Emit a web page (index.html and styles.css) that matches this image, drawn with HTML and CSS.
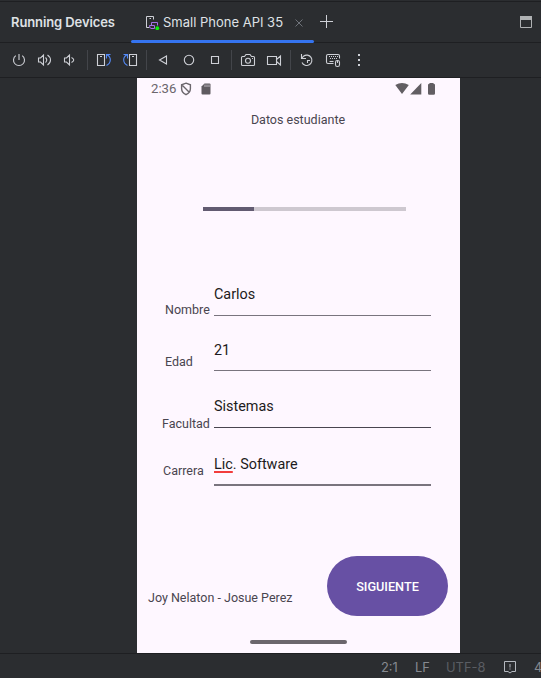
FILE: index.html
```html
<!DOCTYPE html>
<html lang="es">
<head>
<meta charset="utf-8">
<title>Running Devices</title>
<link rel="stylesheet" href="styles.css">
</head>
<body>
<div class="ide">
  <header class="tabs">
    <span class="tabs-title">Running Devices</span>
    <div class="tab">
      <svg class="tab-icon" width="16" height="16" viewBox="144 14 16 16" fill="none">
        <path d="M149.500 27.500H146.500V16.500H153.500V19.500M149.500 18.500H151" stroke="#ced0d6"/>
        <path d="M151.500 25.500V22.500H157.500V25.500M149.500 25.500H154.500V28.500H151Q149.500 28 149.500 25.500Z" stroke="#a571e6"/>
        <circle cx="157.300" cy="28.200" r="1.900" fill="#0cf00c"/>
      </svg>
      <span class="tab-label">Small Phone API 35</span>
      <svg class="tab-close" width="10" height="10" viewBox="0 0 10 10"><path d="M1.500 1.500L8.500 8.500M8.500 1.500L1.500 8.500" stroke="#6f737a"/></svg>
    </div>
    <svg class="tab-add" width="14" height="14" viewBox="0 0 14 14"><path d="M7.500 0V13M1 6.500H14" stroke="#ced0d6"/></svg>
    <svg class="window-icon" width="12" height="12" viewBox="0 0 12 12"><path d="M.5 .5H11.500V11.500H.5Z" fill="none" stroke="#afb1b3"/><path d="M0 0H12V4H0Z" fill="#afb1b3"/></svg>
  </header>
  <div class="toolbar">
    <svg class="tool" viewBox="6 43 26 34"><path d="M19 54V60M15.800 55.600A5.500 5.500 0 1 0 22.200 55.600"/></svg>
    <svg class="tool" viewBox="32 43 26 34"><path d="M38.500 58H40.500L43.500 55V65L40.500 62H38.500ZM45.500 57.500Q48 60 45.500 62.500M47.500 55Q50.500 57 50.500 60Q50.500 63 47.500 65" /></svg>
    <svg class="tool" viewBox="58 43 26 34"><path d="M64.500 58H66.500L69.500 55V65L66.500 62H64.500ZM71.500 57.500Q76 60 71.500 62.500"/></svg>
    <i class="sep"></i>
    <svg class="tool" viewBox="91 43 26 34"><path d="M97.500 54.500H104.500V65.500H97.500ZM100 56.500H102"/><path class="blue" d="M106.500 65.500C111.500 63 111.500 57 107 54.700M110.500 54.500H106.500V58.500"/></svg>
    <svg class="tool" viewBox="117 43 26 34"><path d="M129.500 54.500H136.500V65.500H129.500ZM132 56.500H134"/><path class="blue" d="M127.500 65.500C122.500 63 122.500 57 127 54.700M123.500 54.500H127.500V58.500"/></svg>
    <i class="sep"></i>
    <svg class="tool" viewBox="150 43 26 34"><path d="M159.500 60L166.500 56V64Z"/></svg>
    <svg class="tool" viewBox="176 43 26 34"><circle cx="189" cy="60" r="4.700"/></svg>
    <svg class="tool" viewBox="202 43 26 34"><path d="M211.500 56.500H218.500V63.500H211.500Z"/></svg>
    <i class="sep"></i>
    <svg class="tool" viewBox="235 43 26 34"><path d="M242.500 56.500H244.500L246 54.500H250L251.500 56.500H253.500Q254.500 56.500 254.500 57.500V64.500Q254.500 65.500 253.500 65.500H242.500Q241.500 65.500 241.500 64.500V57.500Q241.500 56.500 242.500 56.500Z"/><circle cx="248" cy="60.700" r="2.500"/><path d="M252 58.500H253"/></svg>
    <svg class="tool" viewBox="261 43 26 34"><path d="M267.500 56.500H276.500V64.500H267.500ZM276.500 59.500L280.500 56V65L276.500 61.500"/></svg>
    <i class="sep"></i>
    <svg class="tool" viewBox="294 43 26 34"><path d="M302 62.500A5.200 5.200 0 1 0 303.500 56.200L302 58M301.500 54V58.500H306M307.500 63V60.500H310"/></svg>
    <svg class="tool" viewBox="320 43 26 34"><path d="M333.500 63.500H328Q326.500 63.500 326.500 62V56Q326.500 54.500 328 54.500H338Q339.500 54.500 339.500 56V58.500"/><path d="M329 56.500H338M330 58.500H337" stroke-dasharray="1 1"/><path d="M329.500 61.500H333.500"/><rect x="335.500" y="60.500" width="4" height="6" rx="1.800"/><path d="M337.500 60.500V63"/></svg>
    <svg class="tool" viewBox="346 43 26 34"><path class="dots" d="M358 54H360V56H358ZM358 59H360V61H358ZM358 64H360V66H358Z"/></svg>
  </div>
  <main class="stage">
    <section class="phone">
      <div class="android-bar">
        <span class="clock">2:36</span>
        <svg class="shield" width="12" height="14" viewBox="180 82 12 14" fill="none" stroke="#6b666c" stroke-width="1.400"><path d="M186 83.200L190.400 84.800V88.500Q190.400 92.500 186 94.600Q181.600 92.500 181.600 88.500V84.800ZM182.500 85.500L189 92"/></svg>
        <svg class="sd" width="10" height="12" viewBox="0 0 10 12"><path d="M3.500 .5H8.500Q9.500 .5 9.500 1.500V10.500Q9.500 11.500 8.500 11.500H1.500Q.5 11.500 .5 10.500V3.500Z" fill="#5f5b60"/><path d="M4 1.500V4M6 1.500V4M8 1.500V4" stroke="#bdb8be"/></svg>
        <svg class="signals" width="41" height="14" viewBox="395 82 41 14" fill="#625e63"><path d="M395.300 85Q402 81 408.800 85L402 94ZM421.300 83V94.500H410.200ZM429.500 83.800V83H433.500V83.800Q435 83.800 435 85V93.500Q435 94.800 433.700 94.800H429.300Q428 94.800 428 93.500V85Q428 83.800 429.500 83.800Z"/></svg>
      </div>
      <h1 class="title">Datos estudiante</h1>
      <div class="progress"><div class="progress-value"></div></div>
      <form class="form">
        <label class="name">Nombre</label><div class="field">Carlos</div>
        <label class="age">Edad</label><div class="field age-field">21</div>
        <label class="faculty">Facultad</label><div class="field faculty-field">Sistemas</div>
        <label class="career">Carrera</label><div class="field career-field"><span class="typo">Lic</span>. Software</div>
      </form>
      <div class="actions">
        <span class="authors">Joy Nelaton - Josue Perez</span>
        <button class="next" type="button">SIGUIENTE</button>
      </div>
      <div class="gesture"></div>
    </section>
  </main>
  <footer class="status">
    <span class="position">2:1</span>
    <span class="ending">LF</span>
    <span class="encoding">UTF-8</span>
    <svg class="notice" width="14" height="14" viewBox="0 0 14 14" fill="none" stroke="#b4b8bf"><path d="M1.500 1.500H12.500V11.500H9L7 13L5 11.500H1.500ZM7 4V7.500M7 8.500V9.500"/></svg>
    <span class="indent">4</span>
  </footer>
</div>
</body>
</html>
```
FILE: styles.css
```css
* { box-sizing: border-box; }
body { margin: 0; background: #2b2d30; font-family: Inter, sans-serif; }
.ide { width: 541px; height: 678px; display: flex; flex-direction: column; overflow: hidden; padding-top: 1px; }
svg { display: block; flex: none; }

.tabs { height: 42px; flex: none; display: flex; align-items: center; border-top: 1px solid #1e1f22; border-bottom: 1px solid #1e1f22; font-size: 13px; color: #dfe1e5; white-space: nowrap; }
.tabs-title { width: 120px; padding-left: 11px; font-weight: 600; letter-spacing: -0.1px; }
.tab { position: relative; width: 183px; height: 40px; margin-left: 11px; padding-left: 13px; display: flex; align-items: center; }
.tab::after { content: ""; position: absolute; left: 0; right: 0; bottom: -1px; height: 3px; border-radius: 2px; background: #3574f0; }
.tab-label { width: 131px; margin-left: 3px; }
.tab-close { margin-top: 2px; }
.tab-add { margin-left: 5px; }
.window-icon { margin-left: auto; margin-right: 9px; }

.toolbar { height: 35px; flex: none; display: flex; align-items: center; padding-left: 6px; border-bottom: 1px solid #1e1f22; }
.tool { width: 26px; height: 34px; fill: none; stroke: #ced0d6; stroke-width: 1.1; }
.tool .blue { stroke: #548af7; }
.tool .dots { fill: #ced0d6; stroke: none; }
.sep { width: 1px; height: 20px; margin: 0 3px; background: #43454a; }

.stage { height: 575px; flex: none; display: flex; padding-left: 137px; }
.phone { width: 323px; background: #fef7ff; font-family: Roboto, sans-serif; color: #49454f; font-size: 12.5px; display: flex; flex-direction: column; }
.android-bar { height: 22px; flex: none; display: flex; align-items: center; padding: 0 24px 0 14px; }
.clock { width: 29px; margin-top: -1px; font-size: 13.2px; color: #6b666c; }
.shield { margin-top: -1px; }
.sd { margin-left: 9px; margin-top: -1px; }
.signals { margin-left: auto; }
.title { margin: 12px 0 0; height: 16px; font: inherit; line-height: 16px; text-align: center; padding-right: 1px; }
.progress { width: 203px; height: 4px; margin: 79px 0 0 66px; flex: none; background: #cec8d0; }
.progress-value { width: 25%; height: 100%; background: #625b71; }

.form { margin: 72px 0 0 25px; display: grid; grid-template-columns: 52px 217px; grid-template-rows: 33px 55px 57px 58px; line-height: 16px; white-space: nowrap; height: 203px; flex: none; }
.form label { align-self: end; }
.name { padding-left: 3px; margin-bottom: -2px; }
.age { padding-left: 3px; margin-bottom: 1px; }
.faculty { margin-bottom: -4px; }
.career { margin-bottom: 7px; padding-left: 1px; }
.field { align-self: end; height: 33px; line-height: 20px; padding-top: 2px; font-size: 14.4px; color: #1d1b20; border-bottom: 1px solid #79747e; }
.age-field { padding-top: 3px; }
.faculty-field { border-bottom-color: #49454f; }
.career-field { border-bottom: 2px solid #79747e; }
.typo { text-decoration: underline 1.500px #f23c3c; text-underline-offset: 2px; }

.actions { display: flex; flex: none; height: 60px; margin: 70px 12px 0 11px; }
.authors { margin-top: 34px; line-height: 16px; }
.next { width: 121px; height: 60px; margin-left: auto; padding: 0; border: 0; border-radius: 30px; background: #6750a4; color: #fff; font: 500 12.7px Roboto, sans-serif; }
.gesture { width: 97px; height: 4px; margin: 24px 0 0 113px; border-radius: 2px; background: #6b666c; }

.status { flex: 1; display: flex; align-items: center; border-top: 1px solid #1e1f22; padding: 2px 0 0 381px; font-size: 12.9px; color: #868a91; white-space: nowrap; }
.position { width: 34px; flex: none; }
.ending { width: 31px; flex: none; }
.encoding { width: 57px; flex: none; color: #5a5d63; }
.indent { margin-left: 17px; }
```
